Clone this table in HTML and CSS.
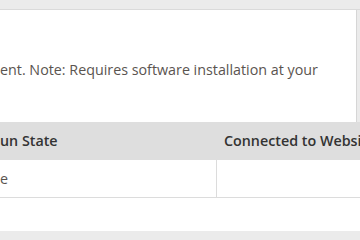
FILE: index.html
```html
<!DOCTYPE html>
<html>
<head>
<meta charset="utf-8">
<link rel="stylesheet" href="styles.css">
</head>
<body>
<div class="top"></div>
<div class="intro">
  <p class="note">ent. Note: Requires software installation at your</p>
</div>
<div class="table">
  <div class="row head">
    <div class="cell first">un State</div>
    <div class="cell second">Connected to Website</div>
  </div>
  <div class="row body">
    <div class="cell first">e</div>
    <div class="cell second"></div>
  </div>
</div>
<div class="after"></div>
<div class="bottom"></div>
</body>
</html>
```
FILE: styles.css
```css
html, body {
  margin: 0;
  padding: 0;
}
body {
  width: 360px;
  height: 240px;
  overflow: hidden;
  background: #ebebeb;
  font-family: "Open Sans", "DejaVu Sans", sans-serif;
}
.top {
  height: 9px;
  border-bottom: 1px solid #dadada;
  background: #ebebeb;
}
.intro {
  width: 357px;
  height: 112px;
  background: #fff;
  border-right: 1px solid #d6d6d6;
  padding-top: 50px;
  box-sizing: border-box;
}
.note {
  margin: 0;
  font-size: 14.3px;
  line-height: 20px;
  color: #5a5450;
  white-space: nowrap;
}
.table {
  width: 360px;
  background: #fff;
}
.row {
  display: flex;
  white-space: nowrap;
  overflow: hidden;
}
.head {
  height: 38px;
  background: #dedede;
  align-items: center;
  font-weight: 600;
  color: #333;
  font-size: 14.3px;
  line-height: 20px;
}
.body {
  height: 37px;
  border-bottom: 1px solid #dcdcdc;
  font-size: 14.3px;
  line-height: 20px;
  color: #5a5450;
}
.cell {
  display: flex;
  align-items: center;
}
.first {
  width: 216px;
  flex: none;
}
.body .first {
  border-right: 1px solid #dcdcdc;
}
.head .first {
  width: 217px;
}
.second {
  padding-left: 7px;
  flex: 1;
}
.after {
  height: 33px;
  background: #fff;
}
.bottom {
  height: 9px;
  background: #ebebeb;
}
```
